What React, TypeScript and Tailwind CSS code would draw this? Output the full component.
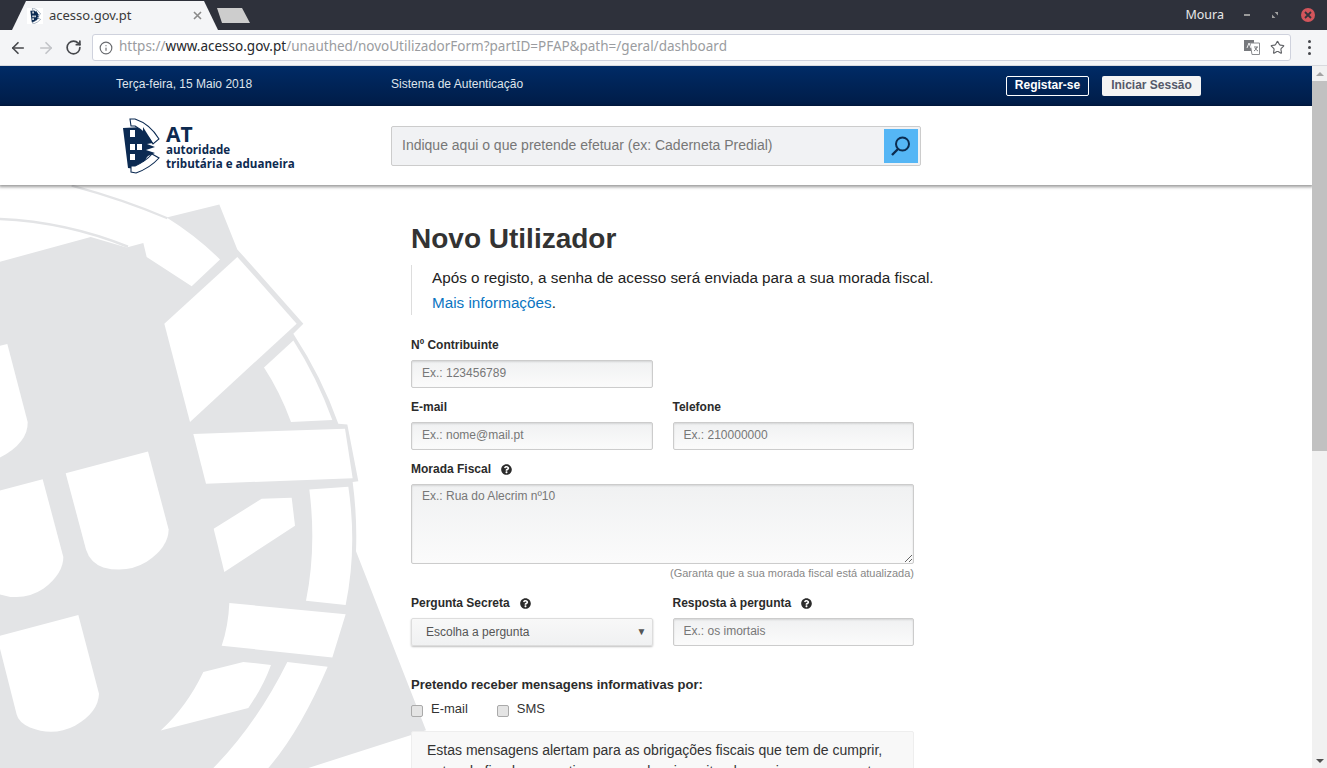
import React from "react";
import { ArrowLeft, ArrowRight, RotateCw, Info, Star } from "lucide-react";
import { FaQuestionCircle } from "react-icons/fa";

const inputCls =
  "block w-full h-[28px] rounded-[2px] border border-[#ccc] bg-linear-to-b from-[#f0f1f2] to-[#fbfbfb] px-[10px] text-[12px] text-[#555] placeholder:text-[#777] shadow-[inset_0_1px_2px_rgba(0,0,0,0.12)] outline-none";
const labelCls = "flex items-center h-[16px] text-[12px] font-bold text-[#2b2b2b]";

function Help() {
  return <FaQuestionCircle className="ml-[10px] w-[11px] h-[11px] text-[#2b2b2b]" />;
}

function Backdrop() {
  return (
    <svg className="absolute left-0 top-[114px] w-[440px] h-[588px]" viewBox="0 0 1320 1568" preserveAspectRatio="none">
      <path d="M0,104 Q200,112 384,178" fill="none" stroke="#e3e4e6" strokeWidth="7" />
      <path d="M215,15 Q370,52 502,102" fill="none" stroke="#e3e4e6" strokeWidth="6" />
      <path
        d="M0,218 L272,152 L380,180 L430,168 L440,205 L575,283 L660,212 Q590,150 500,100 L658,65 L712,185 L910,383 L880,410 Q965,525 1015,650 L1042,652 L1075,803 L1058,805 Q1072,900 1068,990 L1278,1467 L925,1568 L0,1568 Z"
        fill="#e3e4e6"
      />
      <g fill="#fff">
        <path d="M712,205 L890,383 L570,645 L493,383 Z" />
        <path d="M880,428 Q950,525 997,640 L873,645 Q840,565 792,500 Z" />
        <path d="M580,677 L1035,663 L1058,795 L618,810 Z" />
        <path d="M928,825 L1045,818 Q1072,980 1037,1133 L918,1122 Q950,980 928,825 Z" />
        <path d="M785,850 L875,847 L885,922 L673,1045 L641,930 Z" />
        <path d="M688,1128 L1037,1158 L997,1273 L665,1242 Q685,1190 688,1128 Z" />
        <path d="M610,1312 L730,1285 L813,1293 Q790,1350 745,1408 L482,1468 Q560,1405 610,1312 Z" />
        <path d="M862,1285 L983,1298 Q900,1470 805,1568 L640,1568 Q770,1450 862,1285 Z" />
        <path d="M0,442 L22,437 L83,645 Q85,700 0,740 Z" />
        <path d="M0,828 L128,798 L190,1005 Q190,1050 130,1090 Q70,1125 0,1105 Z" />
        <path d="M197,782 L444,724 L506,932 Q505,980 440,1018 Q380,1050 310,1033 Q270,1020 258,985 Z" />
        <path d="M0,1215 L235,1160 L297,1370 Q295,1420 225,1455 Q160,1485 90,1460 Q55,1445 50,1425 L0,1250 Z" />
      </g>
    </svg>
  );
}

function Shield({ className }: { className?: string }) {
  return (
    <svg className={className} viewBox="0 0 38 56">
      <path d="M1,10 L21,9 L24,19 L24,40 L21,52 L6,50 Z" fill="#0b2a52" />
      <path d="M8,1 L13,1 Q28,6 37,21 L31,26 Q24,14 13,8 L9,8 Z" fill="#fff" stroke="#0b2a52" strokeWidth="1.1" />
      <path d="M9,48 L13,48 Q24,43 30,36 L37,40 Q28,50 14,55 L9,54 Z" fill="#fff" stroke="#0b2a52" strokeWidth="1.1" />
      <path d="M21,9 L31,25 L25,26 L33,29 L24,32 L33,35 L26,38 L21,44 Z" fill="#0b2a52" />
      <path d="M8,12 H13 V19 H8 Z M8,26 H13 V32 H8 Z M15,26 H20 V32 H15 Z M8,36 H13 V42 H8 Z" fill="#fff" />
    </svg>
  );
}

export default function App() {
  return (
    <div className="h-[768px] w-[1327px] overflow-hidden flex flex-col font-['Liberation_Sans',Arial,sans-serif] bg-white">
      {/* Browser tab strip */}
      <div className="h-[30px] bg-[#2e313b] flex items-start shrink-0 relative font-['Noto_Sans',sans-serif]">
        <div className="ml-[12px] mt-[1px] w-[206px] h-[29px] bg-[#f4f5f7] [clip-path:polygon(0_100%,14px_0,192px_0,100%_100%)] flex items-center pl-[15px] pr-[16px]">
          <div className="w-[16px] h-[16px] bg-white flex items-center justify-center">
            <Shield className="w-[11px] h-[16px]" />
          </div>
          <span className="ml-[6px] text-[13px] text-[#3a3a3a] flex-1">acesso.gov.pt</span>
          <svg className="w-[9px] h-[9px]" viewBox="0 0 9 9"><path d="M1,1 L8,8 M8,1 L1,8" stroke="#8a8a8a" strokeWidth="1.6" /></svg>
        </div>
        <div className="mt-[8px] -ml-[1px] w-[33px] h-[15px] bg-[#cdcdcd] [clip-path:polygon(5px_100%,0_0,25px_0,100%_100%)]" />
        <div className="ml-auto flex items-center h-[30px] text-[#e6e6e6]">
          <span className="text-[12.5px] text-[#e8e8e8] font-['Noto_Sans',sans-serif]">Moura</span>
          <span className="ml-[20px] w-[6px] h-[2px] bg-[#9a9a9a]" />
          <svg className="ml-[22px] w-[6px] h-[6px]" viewBox="0 0 7 7"><path d="M3,0 H7 V4Z M0,3 L4,7 H0Z" fill="#a0a0a0" /></svg>
          <span className="ml-[23px] mr-[12px] w-[14px] h-[14px] rounded-full bg-[#d4555b] flex items-center justify-center">
            <svg className="w-[8px] h-[8px]" viewBox="0 0 8 8"><path d="M1,1 L7,7 M7,1 L1,7" stroke="#33343c" strokeWidth="1.8" /></svg>
          </span>
        </div>
      </div>

      {/* Browser toolbar */}
      <div className="h-[36px] bg-[#f4f5f7] shrink-0 flex items-center font-['Noto_Sans',sans-serif] border-b border-[#d8dade]">
        <ArrowLeft className="ml-[9px] w-[18px] h-[18px] text-[#45474b]" strokeWidth={2.2} />
        <ArrowRight className="ml-[10px] w-[18px] h-[18px] text-[#c2c4c8]" strokeWidth={2.2} />
        <RotateCw className="ml-[10px] w-[17px] h-[17px] text-[#45474b]" strokeWidth={2.4} />
        <div className="ml-[10px] w-[1199px] h-[27px] bg-white border border-[#cfd2dd] rounded-[3px] flex items-center">
          <Info className="ml-[6px] w-[14px] h-[14px] text-[#6a6c70]" />
          <span className="ml-[6px] text-[13.5px] text-[#9a9ca0] flex-1 whitespace-nowrap -mt-[2px]">
            https://<span className="text-[#26282c]">www.acesso.gov.pt</span>/unauthed/novoUtilizadorForm?partID=PFAP&amp;path=/geral/dashboard
          </span>
          <svg className="w-[16px] h-[15px] mr-[10px]" viewBox="0 0 16 15">
            <rect x="0" y="0" width="10" height="11" fill="#77797d" />
            <path d="M6,3 H15.5 V14.5 H8 Z" fill="#fff" stroke="#8a8c90" />
            <path d="M3,8 L5,3 L7,8" fill="none" stroke="#fff" strokeWidth="0.9" />
            <path d="M10,7 H14 M13,7 Q12,10 10,11 M11,8 Q12,10 14,11" fill="none" stroke="#6a6c70" strokeWidth="0.9" />
          </svg>
          <Star className="w-[15px] h-[15px] mr-[5px] text-[#5f6165]" strokeWidth={1.8} />
        </div>
        <div className="ml-[17px] flex flex-col gap-[3px]">
          <span className="w-[3px] h-[3px] rounded-full bg-[#45474b]" />
          <span className="w-[3px] h-[3px] rounded-full bg-[#45474b]" />
          <span className="w-[3px] h-[3px] rounded-full bg-[#45474b]" />
        </div>
      </div>

      {/* Viewport */}
      <div className="flex-1 flex min-h-0">
        <div className="relative flex-1 min-w-0 overflow-hidden">
          <Backdrop />
          <div className="relative h-[40px] bg-linear-to-b from-[#002b66] to-[#001c47] flex items-center pl-[116px] text-[12px] text-[#dfe4ec]">
            <span className="w-[275px] -mt-[4px]">Terça-feira, 15 Maio 2018</span>
            <span className="-mt-[4px]">Sistema de Autenticação</span>
            <div className="ml-auto flex items-center mr-[111px] text-[12px] font-bold">
              <span className="h-[20px] w-[83px] pb-[2px] border border-white rounded-[2px] text-white flex items-center justify-center">Registar-se</span>
              <span className="ml-[13px] h-[20px] w-[99px] pb-[2px] bg-[#f4f4f4] rounded-[2px] text-[#55596a] flex items-center justify-center">Iniciar Sessão</span>
            </div>
          </div>

          <div className="relative h-[79px] bg-white shadow-[0_1px_3px_1px_rgba(0,0,0,0.4)] flex items-center">
            <div className="ml-[122px] w-[269px] flex items-center">
              <Shield className="w-[38px] h-[56px]" />
              <div className="ml-[6px] mt-[4px] text-[#0d2a50] font-['Open_Sans',sans-serif] font-bold">
                <div className="text-[21px] leading-[21px]">AT</div>
                <div className="text-[11.6px] leading-[14px] -mt-[2px]">autoridade</div>
                <div className="text-[11.6px] leading-[14px] whitespace-nowrap">tributária e aduaneira</div>
              </div>
            </div>
            <div className="w-[530px] h-[40px] border border-[#ccc] rounded-[2px] bg-[#f1f2f4] flex items-center pl-[10px] pr-[1px]">
              <input className="flex-1 bg-transparent outline-none text-[14px] placeholder:text-[#777]" placeholder="Indique aqui o que pretende efetuar (ex: Caderneta Predial)" />
              <div className="mr-[1px] w-[34px] h-[34px] bg-[#55b6f5] flex items-center justify-center">
                <svg className="w-[22px] h-[22px]" viewBox="0 0 22 22" fill="none" stroke="#0c2c50" strokeWidth="2">
                  <circle cx="12.5" cy="9" r="6.5" />
                  <path d="M8,14 L2,20" strokeWidth="2.4" />
                </svg>
              </div>
            </div>
          </div>

          <main className="relative ml-[411px] w-[503px]">
            <h1 className="mt-[38px] h-[32px] text-[28px] leading-[32px] font-bold text-[#333]">Novo Utilizador</h1>
            <div className="mt-[10px] border-l border-[#ddd] pl-[20px] text-[15.27px] leading-[25px] text-[#222]">
              <p className="whitespace-nowrap">Após o registo, a senha de acesso será enviada para a sua morada fiscal.</p>
              <p><span className="text-[#0a75c2]">Mais informações</span>.</p>
            </div>

            <div className={`${labelCls} mt-[22px]`}>Nº Contribuinte</div>
            <div className="mt-[7px] w-[242px]"><input className={`${inputCls} pb-[2px]`} placeholder="Ex.: 123456789" /></div>

            <div className="mt-[11px] grid grid-cols-2 gap-x-[20px]">
              <div>
                <div className={labelCls}>E-mail</div>
                <input className={`${inputCls} mt-[7px] pb-[2px]`} placeholder="Ex.: nome@mail.pt" />
              </div>
              <div>
                <div className={labelCls}>Telefone</div>
                <input className={`${inputCls} mt-[7px] pb-[2px]`} placeholder="Ex.: 210000000" />
              </div>
            </div>

            <div className={`${labelCls} mt-[11px]`}>Morada Fiscal<Help /></div>
            <textarea className={`${inputCls} mt-[7px] !h-[80px] py-[3px] leading-[16px]`} placeholder="Ex.: Rua do Alecrim nº10" />
            <div className="mt-[2px] h-[14px] text-[11px] leading-[14px] text-right text-[#888]">(Garanta que a sua morada fiscal está atualizada)</div>

            <div className="mt-[15px] grid grid-cols-2 gap-x-[20px]">
              <div>
                <div className={labelCls}>Pergunta Secreta<Help /></div>
                <div className="relative mt-[7px]">
                  <select className="block w-full h-[28px] appearance-none rounded-[2px] border border-[#ddd] bg-linear-to-b from-[#f8f8f8] to-[#f0f1f2] pl-[14px] text-[12px] text-[#555] shadow-[0_1px_2px_rgba(0,0,0,0.25)] outline-none">
                    <option>Escolha a pergunta</option>
                  </select>
                  <span className="absolute right-[6px] top-[6px] text-[10px] text-[#555]">▼</span>
                </div>
              </div>
              <div>
                <div className={labelCls}>Resposta à pergunta<Help /></div>
                <input className={`${inputCls} mt-[7px] pb-[3px]`} placeholder="Ex.: os imortais" />
              </div>
            </div>

            <div className="mt-[31px] h-[16px] text-[13px] leading-[16px] font-bold text-[#2b2b2b]">Pretendo receber mensagens informativas por:</div>
            <div className="mt-[8px] h-[16px] flex items-center text-[13px] text-[#333]">
              <input type="checkbox" className="appearance-none w-[12px] h-[12px] mt-[4px] rounded-[2px] border border-[#aaa] bg-[#e4e4e4]" />
              <span className="ml-[8px]">E-mail</span>
              <input type="checkbox" className="appearance-none w-[12px] h-[12px] mt-[4px] ml-[29px] rounded-[2px] border border-[#aaa] bg-[#e4e4e4]" />
              <span className="ml-[8px]">SMS</span>
            </div>
            <div className="mt-[14px] border border-[#eee] rounded-[2px] bg-[#f8f8f8] pt-[8px] px-[15px] text-[14px] leading-[21px] text-[#333]">
              Estas mensagens alertam para as obrigações fiscais que tem de cumprir, antes do fim dos respetivos prazos legais, evitando que incorra em custos
            </div>
          </main>
        </div>

        {/* Scrollbar */}
        <div className="w-[15px] shrink-0 bg-[#f1f1f1] flex flex-col items-center relative">
          <div className="h-[15px] flex items-center justify-center">
            <span className="w-0 h-0 border-x-[4px] border-x-transparent border-b-[4px] border-b-[#a3a3a3]" />
          </div>
          <div className="w-full h-[370px] bg-[#c1c1c1]" />
          <div className="mt-auto h-[15px] flex items-center justify-center">
            <span className="w-0 h-0 border-x-[4px] border-x-transparent border-t-[4px] border-t-[#505050]" />
          </div>
        </div>
      </div>
    </div>
  );
}
